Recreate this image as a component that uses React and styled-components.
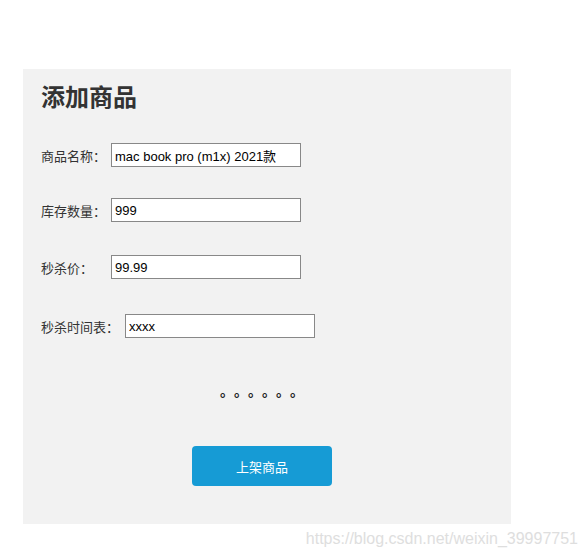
import React from 'react';
import styled, { createGlobalStyle } from 'styled-components';

const GlobalStyle = createGlobalStyle`
  body {
    margin: 0;
    background: #fff;
    font-family: "Noto Sans CJK SC", "Noto Sans", sans-serif;
  }
`;

const Page = styled.div`
  width: 586px;
  height: 558px;
  padding-top: 69px;
  box-sizing: border-box;
  overflow: hidden;
`;

const Panel = styled.div`
  margin-left: 23px;
  width: 488px;
  height: 455px;
  background: #f2f2f2;
  padding: 10px 0 0 18px;
  box-sizing: border-box;
`;

const Title = styled.h2`
  margin: 0;
  font-size: 24px;
  line-height: 34px;
  font-weight: 700;
  color: #333;
`;

const Row = styled.div`
  display: flex;
  align-items: center;
  height: 24px;
  margin-top: ${p => p.$top}px;
`;

const Label = styled.span`
  width: ${p => p.$w}px;
  flex: none;
  font-size: 13px;
  color: #333;
  white-space: nowrap;
`;

const Input = styled.input`
  width: 190px;
  height: 24px;
  box-sizing: border-box;
  border: 1px solid #888;
  background: #fff;
  padding: 0 3px;
  font-family: "Liberation Sans", "Noto Sans CJK SC", sans-serif;
  font-size: 13px;
  color: #000;
  outline: none;
`;

const Dots = styled.div`
  display: flex;
  margin-top: 42px;
  padding-left: 179px;
  height: 20px;
`;

const Dot = styled.span`
  width: 14px;
  flex: none;
  font-size: 14px;
  font-weight: 700;
  line-height: 20px;
  color: #222;
`;

const Submit = styled.button`
  display: block;
  margin: 46px 0 0 151px;
  width: 140px;
  height: 40px;
  border: none;
  border-radius: 4px;
  background: #169bd5;
  color: #fff;
  font-family: "Noto Sans CJK SC", sans-serif;
  font-size: 13px;
  cursor: pointer;
`;

const Watermark = styled.div`
  margin-top: 5px;
  padding-right: 8px;
  text-align: right;
  font-family: "Liberation Sans", sans-serif;
  font-size: 16px;
  line-height: 20px;
  color: #dedede;
`;

const fields = [
  { label: '商品名称：', value: 'mac book pro (m1x) 2021款', w: 70, top: 30 },
  { label: '库存数量：', value: '999', w: 70, top: 31 },
  { label: '秒杀价：', value: '99.99', w: 70, top: 33 },
  { label: '秒杀时间表：', value: 'xxxx', w: 84, top: 35 },
];

export default function App() {
  return (
    <Page>
      <GlobalStyle />
      <Panel>
        <Title>添加商品</Title>
        {fields.map(f => (
          <Row key={f.label} $top={f.top}>
            <Label $w={f.w}>{f.label}</Label>
            <Input defaultValue={f.value} />
          </Row>
        ))}
        <Dots>
          {Array.from({ length: 6 }, (_, i) => (
            <Dot key={i}>。</Dot>
          ))}
        </Dots>
        <Submit>上架商品</Submit>
      </Panel>
      <Watermark>https://blog.csdn.net/weixin_39997751</Watermark>
    </Page>
  );
}
